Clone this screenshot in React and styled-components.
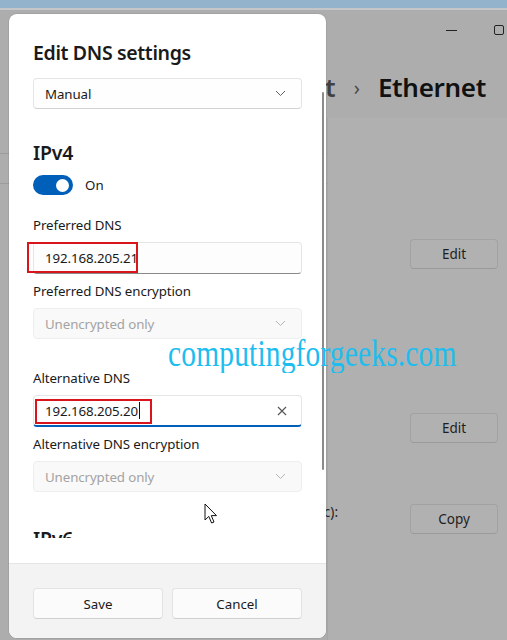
import React from "react";
import styled, { createGlobalStyle } from "styled-components";

const Global = createGlobalStyle`
  html, body { margin: 0; padding: 0; }
  body { font-family: "Noto Sans", "Open Sans", sans-serif; }
  * { box-sizing: border-box; }
`;

const Page = styled.div`
  position: relative;
  width: 507px;
  height: 640px;
  overflow: hidden;
  background: #adadad;
  display: flex;
  flex-direction: column;
`;

const TopStrip = styled.div`
  height: 10px;
  flex: none;
  background: #93b2cb;
  border-bottom: 2px solid #c4c6c8;
`;

const Window = styled.div`
  flex: 1;
  display: grid;
  grid-template-columns: 327px minmax(0, 1fr);
`;

const Sidebar = styled.div`
  display: flex;
  flex-direction: column;
  padding-top: 143px;
`;

const SideItem = styled.div`
  height: 31px;
  border-top: 1px solid #9c9c9c;
  border-bottom: 1px solid #9c9c9c;
`;

const Main = styled.div`
  min-width: 0;
  display: flex;
  flex-direction: column;
`;

const Caption = styled.div`
  height: 32px;
  flex: none;
  display: flex;
  align-items: center;
  justify-content: flex-end;
  gap: 37px;
  padding-right: 3px;
  padding-top: 8px;
`;

const MinIcon = styled.div`
  width: 11px;
  height: 1px;
  background: #222;
`;

const MaxIcon = styled.div`
  width: 10px;
  height: 10px;
  border: 1px solid #222;
  border-radius: 2px;
`;

const Crumbs = styled.div`
  height: 76px;
  flex: none;
  display: flex;
  align-items: center;
  justify-content: flex-end;
  gap: 18px;
  padding-right: 21px;
  padding-top: 14px;
  font-family: "Noto Sans", sans-serif;
  font-weight: 600;
  font-size: 26px;
  white-space: nowrap;
`;

const CrumbDim = styled.span`
  color: #404040;
  flex: none;
`;

const CrumbSep = styled.span`
  font-weight: 400;
  font-size: 20px;
  color: #4a4a4a;
  flex: none;
`;

const CrumbCur = styled.span`
  color: #111;
  letter-spacing: -0.3px;
  flex: none;
`;

const Panel = styled.div`
  flex: 1;
  background: #b0b0b0;
  border-left: 1px solid #a6a6a6;
  display: flex;
  flex-direction: column;
  align-items: flex-end;
  padding-right: 9px;
`;

const BgButton = styled.div`
  flex: none;
  width: 88px;
  height: 30px;
  margin-top: ${(p) => p.$mt}px;
  border: 1px solid #a2a2a2;
  border-bottom-color: #9a9a9a;
  border-radius: 4px;
  background: #b1b1b1;
  display: flex;
  align-items: center;
  justify-content: center;
  font-size: 13.5px;
  color: #1e1e1e;
`;

const BgRow = styled.div`
  flex: none;
  display: flex;
  align-items: center;
  justify-content: flex-end;
  width: 180px;
  margin-top: ${(p) => p.$mt}px;
`;

const BgText = styled.span`
  flex: none;
  font-size: 13.5px;
  color: #1e1e1e;
  white-space: nowrap;
  margin-right: 72px;
  margin-bottom: 14px;
`;

const Dialog = styled.div`
  position: absolute;
  left: 9px;
  top: 14px;
  width: 317px;
  height: 624px;
  background: #ffffff;
  border-radius: 8px;
  overflow: hidden;
  display: flex;
  flex-direction: column;
  box-shadow: 0 0 0 1px rgba(0, 0, 0, 0.06);
`;

const Scroll = styled.div`
  height: 524px;
  flex: none;
  overflow: hidden;
  padding: 25px 24px 0 24px;
  display: flex;
  flex-direction: column;
  color: #1a1a1a;
  & > * { flex-shrink: 0; }
`;

const Spacer = styled.div`
  flex: none;
  height: 25px;
`;

const ScrollBar = styled.div`
  position: absolute;
  left: 313px;
  top: 78px;
  width: 2px;
  height: 378px;
  border-radius: 1px;
  background: #8a8a8a;
`;

const Title = styled.div`
  font-size: 19.5px;
  font-weight: 600;
  line-height: 28px;
  letter-spacing: -0.35px;
`;

const Heading = styled.div`
  font-size: 19.5px;
  font-weight: 600;
  line-height: 28px;
  margin-top: ${(p) => p.$mt}px;
  letter-spacing: -0.2px;
`;

const Select = styled.div`
  height: 31px;
  margin-top: ${(p) => p.$mt || 0}px;
  border: 1px solid ${(p) => (p.$disabled ? "#eeeeee" : "#e5e5e5")};
  border-bottom-color: ${(p) => (p.$disabled ? "#eeeeee" : "#d2d2d2")};
  border-radius: 4px;
  background: ${(p) => (p.$disabled ? "#f9f9f9" : "#fefefe")};
  display: flex;
  align-items: center;
  justify-content: space-between;
  padding: 0 15px 0 11px;
  font-size: 13.3px;
  letter-spacing: -0.1px;
  color: ${(p) => (p.$disabled ? "#a3a3a3" : "#1a1a1a")};
`;

const ToggleRow = styled.div`
  display: flex;
  align-items: center;
  gap: 12px;
  margin-top: 8px;
  font-size: 13.3px;
`;

const Toggle = styled.div`
  width: 40px;
  height: 20px;
  border-radius: 10px;
  background: #005fb8;
  display: flex;
  align-items: center;
  justify-content: flex-end;
  padding-right: 4px;
`;

const Knob = styled.div`
  width: 13px;
  height: 13px;
  border-radius: 50%;
  background: #fff;
`;

const Label = styled.div`
  font-size: 13.3px;
  line-height: 20px;
  letter-spacing: -0.1px;
  margin-top: ${(p) => p.$mt}px;
`;

const InputBox = styled.div`
  position: relative;
  height: 32px;
  margin-top: 7px;
  border: 1px solid #e5e5e5;
  border-bottom: ${(p) => (p.$focused ? "2px solid #005fb8" : "1px solid #8a8a8a")};
  border-radius: 4px;
  background: ${(p) => (p.$focused ? "#ffffff" : "#fdfdfd")};
  display: flex;
  align-items: center;
  justify-content: space-between;
  padding: 0 14px 0 11px;
  font-size: 13.3px;
  letter-spacing: -0.1px;
  color: #1a1a1a;
`;

const Caret = styled.span`
  display: inline-block;
  width: 1px;
  height: 17px;
  margin-left: 1px;
  vertical-align: -3px;
  background: #111;
`;

const Mark = styled.div`
  position: absolute;
  left: ${(p) => p.$l}px;
  top: ${(p) => p.$t}px;
  width: ${(p) => p.$w}px;
  height: ${(p) => p.$h}px;
  border: 2px solid #d9141b;
  pointer-events: none;
`;

const Footer = styled.div`
  flex: 1;
  background: #f3f3f3;
  border-top: 1px solid #e5e5e5;
  padding: 24px 24px 0 24px;
  display: grid;
  grid-template-columns: 130px 130px;
  column-gap: 9px;
  align-content: start;
`;

const Button = styled.div`
  height: 31px;
  border: 1px solid #e3e3e3;
  border-bottom-color: #d0d0d0;
  border-radius: 4px;
  background: #fbfbfb;
  display: flex;
  align-items: center;
  justify-content: center;
  font-size: 13.3px;
  color: #1a1a1a;
`;

const Watermark = styled.div`
  position: absolute;
  left: 168px;
  top: 335px;
  font-family: "Liberation Serif", serif;
  font-size: 29.5px;
  line-height: 36px;
  color: #1ebdef;
  letter-spacing: 0.15px;
  transform: scaleY(1.25);
  transform-origin: left center;
  white-space: nowrap;
  pointer-events: none;
`;

const Cursor = styled.svg`
  position: absolute;
  left: 204px;
  top: 503px;
`;

const Chevron = () => (
  <svg width="11" height="7" viewBox="0 0 11 7">
    <path d="M1 1 L5.5 5.5 L10 1" fill="none" stroke="#606060" strokeWidth="1" />
  </svg>
);

const DimChevron = () => (
  <svg width="11" height="7" viewBox="0 0 11 7">
    <path d="M1 1 L5.5 5.5 L10 1" fill="none" stroke="#b5b5b5" strokeWidth="1" />
  </svg>
);

const ClearIcon = () => (
  <svg width="10" height="10" viewBox="0 0 10 10">
    <path d="M1 1 L9 9 M9 1 L1 9" fill="none" stroke="#555" strokeWidth="1.1" />
  </svg>
);

export default function App() {
  return (
    <>
      <Global />
      <Page>
        <TopStrip />
        <Window>
          <Sidebar>
            <SideItem />
          </Sidebar>
          <Main>
            <Caption>
              <MinIcon />
              <MaxIcon />
            </Caption>
            <Crumbs>
              <CrumbDim>Network &amp; internet</CrumbDim>
              <CrumbSep>›</CrumbSep>
              <CrumbCur>Ethernet</CrumbCur>
            </Crumbs>
            <Panel>
              <BgButton $mt={121}>Edit</BgButton>
              <BgButton $mt={144}>Edit</BgButton>
              <BgRow $mt={60}>
                <BgText>IPv4 DNS servers (Automatic):</BgText>
                <BgButton $mt={0}>Copy</BgButton>
              </BgRow>
            </Panel>
          </Main>
        </Window>

        <Dialog>
          <Scroll>
            <Title>Edit DNS settings</Title>
            <Select $mt={11}>
              <span>Manual</span>
              <Chevron />
            </Select>

            <Heading $mt={30}>IPv4</Heading>
            <ToggleRow>
              <Toggle>
                <Knob />
              </Toggle>
              <span>On</span>
            </ToggleRow>

            <Label $mt={20}>Preferred DNS</Label>
            <InputBox>
              <span>192.168.205.21</span>
              <Mark $l={-7} $t={-1} $w={111} $h={31} />
            </InputBox>

            <Label $mt={7}>Preferred DNS encryption</Label>
            <Select $mt={7} $disabled>
              <span>Unencrypted only</span>
              <DimChevron />
            </Select>

            <Label $mt={29}>Alternative DNS</Label>
            <InputBox $focused>
              <span>
                192.168.205.20
                <Caret />
              </span>
              <ClearIcon />
              <Mark $l={1} $t={3} $w={117} $h={25} />
            </InputBox>

            <Label $mt={7}>Alternative DNS encryption</Label>
            <Select $mt={7} $disabled>
              <span>Unencrypted only</span>
              <DimChevron />
            </Select>

            <Heading $mt={33}>IPv6</Heading>
          </Scroll>
          <Spacer />
          <Footer>
            <Button>Save</Button>
            <Button>Cancel</Button>
          </Footer>
          <ScrollBar />
        </Dialog>

        <Watermark>computingforgeeks.com</Watermark>

        <Cursor width="14" height="22" viewBox="0 0 14 22">
          <path
            d="M1 1 L1 17 L4.8 13.4 L7.6 20 L10 19 L7.3 12.6 L12.5 12.6 Z"
            fill="#ffffff"
            stroke="#111"
            strokeWidth="1"
            strokeLinejoin="round"
          />
        </Cursor>
      </Page>
    </>
  );
}
